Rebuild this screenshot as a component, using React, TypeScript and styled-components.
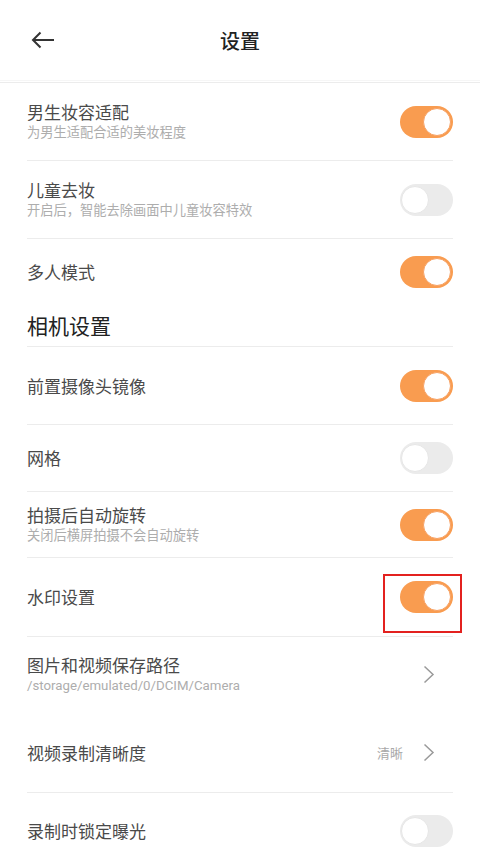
import React from 'react';
import styled, { createGlobalStyle } from 'styled-components';

const GlobalStyle = createGlobalStyle`
  html, body {
    margin: 0;
    padding: 0;
    background: #ffffff;
  }
  body {
    font-family: "Noto Sans CJK SC", "Noto Sans", sans-serif;
  }
`;

const Page = styled.div`
  width: 480px;
  height: 853px;
  overflow: hidden;
  background: #fff;
`;

const Header = styled.header`
  height: 80px;
  display: flex;
  align-items: center;
  justify-content: center;
  position: relative;
  border-bottom: 1px solid #f6f6f6;
`;

const BackButton = styled.button`
  position: absolute;
  left: 28px;
  top: 26px;
  width: 30px;
  height: 28px;
  padding: 0;
  border: none;
  background: none;
  display: flex;
  align-items: center;
  justify-content: center;
`;

const HeaderTitle = styled.h1`
  margin: 0;
  font-size: 20px;
  font-weight: 500;
  color: #222;
`;

const List = styled.div`
  padding: 0 27px;
  border-top: 1px solid #ececec;
  margin-top: 1px;
`;

const Row = styled.div<{ $h: number; $line?: boolean }>`
  height: ${({ $h }) => $h}px;
  display: flex;
  align-items: center;
  justify-content: space-between;
  border-bottom: ${({ $line }) => ($line ? '1px solid #ececec' : '1px solid transparent')};
  box-sizing: border-box;
  position: relative;
`;

const Texts = styled.div`
  display: flex;
  flex-direction: column;
`;

const Title = styled.div`
  font-size: 17px;
  line-height: 22px;
  color: #4a4a4a;
`;

const Sub = styled.div`
  font-family: Roboto, "Noto Sans CJK SC", sans-serif;
  font-size: 13.25px;
  line-height: 18px;
  color: #adadad;
  margin-top: 1px;
`;

const SectionTitle = styled.div`
  height: 42px;
  display: flex;
  align-items: center;
  font-size: 21px;
  color: #222;
  border-bottom: 1px solid #ececec;
  box-sizing: border-box;
  padding-bottom: 2px;
`;

const Track = styled.div<{ $on: boolean }>`
  width: 53px;
  height: 32px;
  border-radius: 16px;
  background: ${({ $on }) => ($on ? '#f99c50' : '#ebebeb')};
  position: relative;
  flex-shrink: 0;
`;

const Knob = styled.div<{ $on: boolean }>`
  position: absolute;
  top: 2px;
  ${({ $on }) => ($on ? 'right: 2px;' : 'left: 1px;')}
  width: 28px;
  height: 28px;
  border-radius: 50%;
  box-sizing: border-box;
  background: #fff;
  border: 1.5px solid ${({ $on }) => ($on ? '#f7a163' : '#e6e6e6')};
`;

const Right = styled.div`
  display: flex;
  align-items: center;
  gap: 20px;
  margin-right: 18px;
`;

const Value = styled.span`
  font-size: 13px;
  color: #a8a8a8;
`;

const Highlight = styled.div`
  position: absolute;
  right: -9px;
  top: 16px;
  width: 79px;
  height: 59px;
  border: 2px solid #e3211f;
  box-sizing: border-box;
`;

const Toggle = ({ on }: { on: boolean }) => (
  <Track $on={on}>
    <Knob $on={on} />
  </Track>
);

const Chevron = () => (
  <svg width="12" height="19" viewBox="0 0 12 19">
    <path d="M1.5 1.5 L10 9.5 L1.5 17.5" fill="none" stroke="#9a9a9a" strokeWidth="1.5" />
  </svg>
);

const ArrowLeft = () => (
  <svg width="26" height="20" viewBox="0 0 26 20">
    <path d="M24 10 H3 M10.5 2.5 L3 10 L10.5 17.5" fill="none" stroke="#333" strokeWidth="2" />
  </svg>
);

export default function App() {
  return (
    <Page>
      <GlobalStyle />
      <Header>
        <BackButton>
          <ArrowLeft />
        </BackButton>
        <HeaderTitle>设置</HeaderTitle>
      </Header>
      <List>
        <Row $h={78} $line>
          <Texts>
            <Title>男生妆容适配</Title>
            <Sub>为男生适配合适的美妆程度</Sub>
          </Texts>
          <Toggle on />
        </Row>
        <Row $h={78} $line>
          <Texts>
            <Title>儿童去妆</Title>
            <Sub>开启后，智能去除画面中儿童妆容特效</Sub>
          </Texts>
          <Toggle on={false} />
        </Row>
        <Row $h={66}>
          <Title>多人模式</Title>
          <Toggle on />
        </Row>
        <SectionTitle>相机设置</SectionTitle>
        <Row $h={78} $line>
          <Title>前置摄像头镜像</Title>
          <Toggle on />
        </Row>
        <Row $h={67} $line>
          <Title>网格</Title>
          <Toggle on={false} />
        </Row>
        <Row $h={66} $line>
          <Texts>
            <Title>拍摄后自动旋转</Title>
            <Sub>关闭后横屏拍摄不会自动旋转</Sub>
          </Texts>
          <Toggle on />
        </Row>
        <Row $h={79} $line>
          <Title>水印设置</Title>
          <Toggle on />
          <Highlight />
        </Row>
        <Row $h={76}>
          <Texts>
            <Title>图片和视频保存路径</Title>
            <Sub>/storage/emulated/0/DCIM/Camera</Sub>
          </Texts>
          <Right>
            <Chevron />
          </Right>
        </Row>
        <Row $h={80} $line>
          <Title>视频录制清晰度</Title>
          <Right>
            <Value>清晰</Value>
            <Chevron />
          </Right>
        </Row>
        <Row $h={76}>
          <Title>录制时锁定曝光</Title>
          <Toggle on={false} />
        </Row>
      </List>
    </Page>
  );
}
